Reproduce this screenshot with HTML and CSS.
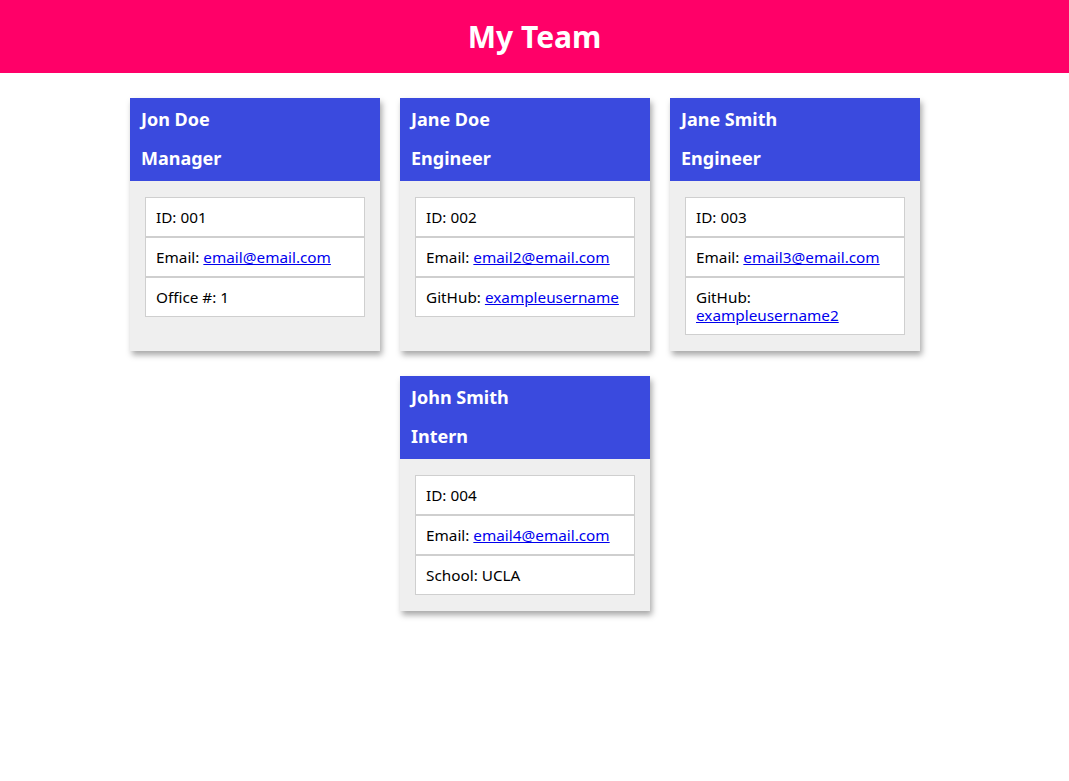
FILE: index.html
```html
<!DOCTYPE html>
<html>
<head>
<meta charset="utf-8">
<title>My Team</title>
<link rel="stylesheet" href="styles.css">
</head>
<body>
<header class="top">
  <h1 class="title">My Team</h1>
</header>
<main class="team">
  <div class="card">
    <div class="card-head">
      <h2 class="name">Jon Doe</h2>
      <h2 class="role">Manager</h2>
    </div>
    <div class="card-body">
      <ul class="list">
        <li class="item">ID: 001</li>
        <li class="item">Email: <a href="#">email@email.com</a></li>
        <li class="item">Office #: 1</li>
      </ul>
    </div>
  </div>
  <div class="card">
    <div class="card-head">
      <h2 class="name">Jane Doe</h2>
      <h2 class="role">Engineer</h2>
    </div>
    <div class="card-body">
      <ul class="list">
        <li class="item">ID: 002</li>
        <li class="item">Email: <a href="#">email2@email.com</a></li>
        <li class="item">GitHub: <a href="#">exampleusername</a></li>
      </ul>
    </div>
  </div>
  <div class="card">
    <div class="card-head">
      <h2 class="name">Jane Smith</h2>
      <h2 class="role">Engineer</h2>
    </div>
    <div class="card-body">
      <ul class="list">
        <li class="item">ID: 003</li>
        <li class="item">Email: <a href="#">email3@email.com</a></li>
        <li class="item">GitHub: <a href="#">exampleusername2</a></li>
      </ul>
    </div>
  </div>
  <div class="card">
    <div class="card-head">
      <h2 class="name">John Smith</h2>
      <h2 class="role">Intern</h2>
    </div>
    <div class="card-body">
      <ul class="list">
        <li class="item">ID: 004</li>
        <li class="item">Email: <a href="#">email4@email.com</a></li>
        <li class="item">School: UCLA</li>
      </ul>
    </div>
  </div>
</main>
</body>
</html>
```
FILE: styles.css
```css
* { box-sizing: border-box; }
body {
  margin: 0;
  font-family: "Noto Sans", "Open Sans", sans-serif;
  color: #000;
  background: #fff;
}
.top {
  background: #ff0068;
  height: 73px;
  display: flex;
  align-items: center;
  justify-content: center;
}
.title {
  margin: 0;
  color: #fff;
  font-size: 30px;
  font-weight: 700;
  line-height: 1;
}
.team {
  display: flex;
  flex-wrap: wrap;
  justify-content: center;
  gap: 25px 20px;
  width: 790px;
  margin: 25px 0 40px 130px;
}
.card {
  width: 250px;
  background: #efefef;
  box-shadow: 2px 4px 6px rgba(0,0,0,0.35);
  display: flex;
  flex-direction: column;
}
.card-head {
  background: #3a4ade;
  color: #fff;
  padding: 2px 11px 3px;
}
.name, .role {
  margin: 0;
  font-size: 18px;
  font-weight: 700;
  line-height: 39px;
}
.card-body {
  padding: 16px 15px;
  flex: 1;
}
.list {
  list-style: none;
  margin: 0;
  padding: 0;
  background: #fff;
}
.item {
  border: 1px solid #cfcfcf;
  padding: 10px;
  font-size: 15.3px;
  line-height: 18px;
  background: #fff;
}
.item a { color: #0000ee; }
```
